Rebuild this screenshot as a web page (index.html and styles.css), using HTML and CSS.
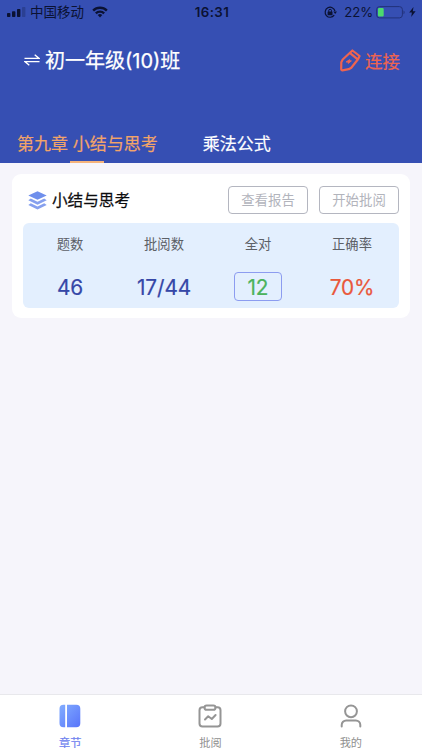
FILE: index.html
```html
<!DOCTYPE html>
<html lang="zh-CN">
<head>
<meta charset="utf-8">
<meta name="viewport" content="width=device-width, initial-scale=1">
<title>章节</title>
<link rel="stylesheet" href="styles.css">
</head>
<body>
<header class="header">
  <div class="status">
    <div class="status-left">
      <svg class="signal" width="19" height="10" viewBox="0 0 19 10"><rect x="0" y="6" width="3.4" height="4" rx=".8"/><rect x="5" y="4.2" width="3.4" height="5.8" rx=".8"/><rect x="10" y="2" width="3.4" height="8" rx=".8"/><rect x="15" y="0" width="3.4" height="10" rx=".8" opacity=".25"/></svg>
      <span class="carrier">中国移动</span>
      <svg class="wifi" width="16" height="12" viewBox="0 0 16 12"><path d="M.3 3.7a11 11 0 0 1 15.4 0L14 5.5a8.6 8.6 0 0 0-12 0z"/><path d="M3 6.5a7.1 7.1 0 0 1 10 0l-1.7 1.7a4.7 4.7 0 0 0-6.6 0z"/><path d="M5.7 9.1a3.3 3.3 0 0 1 4.6 0L8 11.5z"/></svg>
    </div>
    <span class="time">16:31</span>
    <div class="status-right">
      <svg class="lock" width="13" height="13" viewBox="0 0 13 13"><path d="M10.2 9.2A5 5 0 1 1 11 5" fill="none" stroke="#0b1233" stroke-width="1.2"/><path d="M9.3 5.4h3.7L11.2 8z"/><rect x="3.6" y="5.5" width="4.9" height="3.7" rx=".5"/><path d="M4.7 5.8V4.7a1.4 1.4 0 0 1 2.8 0v1.1" fill="none" stroke="#0b1233"/></svg>
      <span class="percent">22%</span>
      <svg class="battery" width="29" height="13" viewBox="0 0 29 13"><rect x=".6" y=".6" width="25.8" height="11.3" rx="3" fill="none" stroke="#22327a" stroke-width="1"/><path d="M27.5 4.5c1.5.6 1.5 3 0 3.7z" fill="#22327a"/><rect x="2" y="2" width="5.7" height="8.5" rx="1" fill="#4cda6e"/></svg>
      <svg class="bolt" width="7" height="10" viewBox="0 0 7 10"><path d="M4.5 0 .2 5.6h2.7L2.2 10l4.4-5.8H3.8z"/></svg>
    </div>
  </div>
  <div class="titlebar">
    <div class="class-switch">
      <svg width="16" height="12" viewBox="0 0 16 12" fill="none" stroke="#fff" stroke-width="1.3"><path d="M.5 4.4h14.6L10.7.7M15.5 7.6H.9l4.4 3.7"/></svg>
      <h1>初一年级(10)班</h1>
    </div>
    <div class="connect">
      <svg width="22" height="23" viewBox="0 0 22 23" fill="none" stroke="#ee6450" stroke-width="2.2" stroke-linejoin="round" stroke-linecap="round"><path d="M13.4 1.5 20.6 7 19 10.300 12.300 18.700 9.800 20.200 3.500 21.300Q2.200 21.400 2.200 20L2.300 13.200 3.700 10.500z"/><path d="m11.400 4.400 7 5.700"/><path d="m7.400 12.800 3.300-2.200.2 1.200 1.500.1-3.200 2.500-.3-1.300z" fill="#ee6450" stroke-width=".9"/></svg>
      <span>连接</span>
    </div>
  </div>
  <nav class="tabs">
    <a class="tab active">第九章 小结与思考</a>
    <a class="tab">乘法公式</a>
  </nav>
</header>
<main>
  <section class="card">
    <div class="card-head">
      <svg width="19" height="19" viewBox="0 0 19 19"><path d="M9.5.2 18.7 4.5 9.5 8.8.3 4.5z" fill="#6f8fec"/><path d="m2.800 7.600 6.700 3.100 6.700-3.100 2.500 1.600-9.200 4.500L.3 9.200z" fill="#86a0ee"/><path d="m2.800 12.300 6.700 3.100 6.700-3.100 2.500 1.600-9.200 4.700L.3 13.900z" fill="#86a0ee"/></svg>
      <h2>小结与思考</h2>
      <button>查看报告</button>
      <button>开始批阅</button>
    </div>
    <div class="stats">
      <div class="stat"><span class="label">题数</span><span class="value">46</span></div>
      <div class="stat"><span class="label">批阅数</span><span class="value">17/44</span></div>
      <div class="stat"><span class="label">全对</span><span class="value boxed">12</span></div>
      <div class="stat"><span class="label">正确率</span><span class="value red">70%</span></div>
    </div>
  </section>
</main>
<nav class="bottom">
  <a class="item current">
    <svg width="22" height="24" viewBox="0 0 22 24"><defs><linearGradient id="book" x1="0" y1="0" x2="1" y2="1"><stop stop-color="#82adff"/><stop offset="1" stop-color="#5874fa"/></linearGradient></defs><path d="M4.5.8h1.7v22.4H4.5a4 4 0 0 1-4-4V4.800a4 4 0 0 1 4-4zM8 .8h9.300a4 4 0 0 1 4 4v14.400a4 4 0 0 1-4 4H8z" fill="url(#book)"/></svg>
    <span>章节</span>
  </a>
  <a class="item">
    <svg width="24" height="24" viewBox="0 0 24 24" fill="none" stroke="#959595" stroke-width="2" stroke-linecap="round" stroke-linejoin="round"><path d="M6.5 3.300H4.500a3 3 0 0 0-3 3v13.200a3 3 0 0 0 3 3h15a3 3 0 0 0 3-3V6.300a3 3 0 0 0-3-3h-2"/><rect x="6.500" y="1.400" width="11" height="4.400" rx="2.100"/><path d="m7 15.500 3.200-3.200 3.600 2.700 3.800-4"/></svg>
    <span>批阅</span>
  </a>
  <a class="item">
    <svg width="24" height="24" viewBox="0 0 24 24" fill="none" stroke="#959595" stroke-width="2" stroke-linecap="round"><circle cx="12" cy="7.300" r="5.900"/><path d="M2.700 22.500v-1.500a4.500 4.500 0 0 1 4.500-4.500h9.600a4.500 4.500 0 0 1 4.500 4.500v1.500"/></svg>
    <span>我的</span>
  </a>
</nav>
</body>
</html>
```
FILE: styles.css
```css
* { box-sizing: border-box; }
body {
  margin: 0;
  height: 750px;
  display: flex;
  flex-direction: column;
  background: #f6f5fb;
  font-family: Inter, "Noto Sans CJK SC", sans-serif;
  color: #0c0c0e;
  overflow: hidden;
}
svg { display: block; flex: none; }
h1, h2 { margin: 0; font-weight: 400; -webkit-text-stroke: .25px currentColor; }
.header { height: 163px; background: #364fb3; display: flex; flex-direction: column; }
.status {
  height: 24px;
  display: grid;
  grid-template-columns: 1fr auto 1fr;
  align-items: center;
  padding: 0 6px 0 7px;
  font-size: 13px;
  line-height: 24px;
  color: #0b1233;
}
.status svg { fill: #0b1233; }
.status-left, .status-right { display: flex; align-items: center; }
.status-right { justify-content: flex-end; }
.carrier { margin-left: 4px; font-size: 13.5px; }
.wifi { margin-left: 8px; }
.time { font-weight: 600; font-size: 13.3px; letter-spacing: .4px; padding-left: 1px; }
.percent { margin: 0 3px 0 7px; font-size: 13.2px; letter-spacing: -.1px; }
.bolt { margin-left: 4px; }
.titlebar {
  height: 72px;
  display: flex;
  align-items: center;
  justify-content: space-between;
  padding: 0 22px 0 24px;
}
.class-switch { display: flex; align-items: center; gap: 5px; color: #fff; }
h1 { font-size: 20px; line-height: 30px; padding-top: 2px; white-space: nowrap; }
.connect { display: flex; align-items: center; gap: 4px; color: #ee6450; font-size: 17.5px; -webkit-text-stroke: .2px currentColor; }
.tabs { margin-top: auto; height: 41px; padding-left: 17px; display: flex; gap: 45px; }
.tab {
  display: flex;
  flex-direction: column;
  align-items: center;
  font-size: 17px;
  line-height: 44px;
  height: 41px;
  color: #fff;
  white-space: nowrap;
  -webkit-text-stroke: .2px currentColor;
}
.active { color: #f2a468; }
.active::after { content: ""; flex: none; width: 34px; height: 2px; margin-top: -5px; background: #f5b37c; }
main { flex: 1; padding: 11px 12px 0 12px; }
.card { height: 144px; padding: 12px 11px 10px; border-radius: 9px; background: #fff; }
.card-head { display: flex; align-items: center; height: 28px; padding-left: 5px; }
h2 { font-size: 15.6px; line-height: 28px; padding-top: 2px; margin: 0 auto 0 5px; }
button {
  width: 80px;
  height: 28px;
  padding: 0;
  margin-left: 11px;
  border: 1px solid #b4b6c0;
  border-radius: 4px;
  background: #fff;
  color: #b2b4bc;
  font: 13.4px/26px Inter, "Noto Sans CJK SC", sans-serif;
}
.stats { display: grid; grid-template-columns: repeat(4, 1fr); height: 85px; margin-top: 9px; border-radius: 6px; background: #e3effe; }
.stat { display: flex; flex-direction: column; align-items: center; }
.label { margin-top: 11px; font-size: 13.3px; line-height: 20px; color: #5c6067; }
.value { margin-top: 18px; height: 30px; line-height: 31px; font-size: 20.8px; letter-spacing: -.1px; color: #3547a7; -webkit-text-stroke: .2px currentColor; }
.boxed { width: 48px; height: 29px; line-height: 29px; text-align: center; border: 1px solid #8c9cf0; border-radius: 4px; color: #4bb35d; }
.red { color: #e9583c; }
.bottom { height: 56px; padding-right: 1px; background: #fff; border-top: 1px solid #e8e8ec; display: grid; grid-template-columns: repeat(3, 1fr); }
.item { display: flex; flex-direction: column; align-items: center; padding-top: 9px; font-size: 11.2px; line-height: 16px; color: #909090; }
.item span { margin-top: 7px; }
.current { color: #6f83ef; -webkit-text-stroke: .2px currentColor; }
```
